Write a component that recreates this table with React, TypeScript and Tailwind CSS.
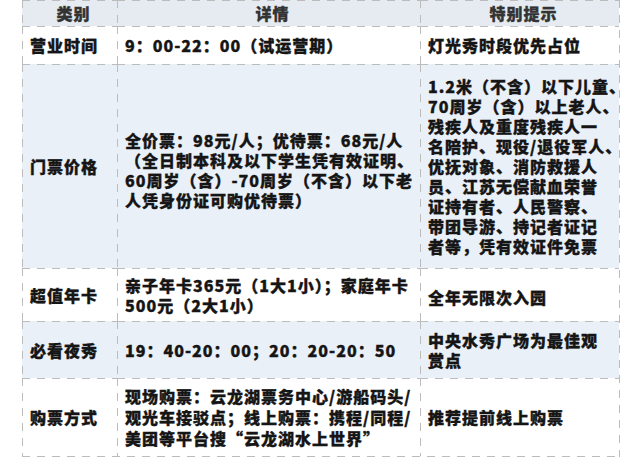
import React from "react";

const H =
  "[background:linear-gradient(to_right,#bcbcbc_8px,transparent_8px)_0_0/15px_1px_repeat-x,linear-gradient(to_bottom,#bcbcbc_8px,transparent_8px)_0_0/1px_15px_repeat-y,#e6ebf1]";
const W =
  "[background:linear-gradient(to_right,#bcbcbc_8px,transparent_8px)_0_0/15px_1px_repeat-x,linear-gradient(to_bottom,#bcbcbc_8px,transparent_8px)_0_0/1px_15px_repeat-y,#ffffff]";
const B =
  "[background:linear-gradient(to_right,#bcbcbc_8px,transparent_8px)_0_0/15px_1px_repeat-x,linear-gradient(to_bottom,#bcbcbc_8px,transparent_8px)_0_0/1px_15px_repeat-y,#eaf0f8]";

function Lines({ lines }: { lines: string[] }) {
  return (
    <div className="flex flex-col">
      {lines.map((l, i) => (
        <span key={i} className="whitespace-nowrap">
          {l}
        </span>
      ))}
    </div>
  );
}

function Cell({
  bg,
  children,
  className = "",
}: {
  bg: string;
  children: React.ReactNode;
  className?: string;
}) {
  return (
    <div className={`${bg} flex items-center pl-2 ${className}`}>{children}</div>
  );
}

export default function App() {
  return (
    <div className="w-[640px] h-[462px] bg-white overflow-hidden font-['Noto_Sans_CJK_SC','Noto_Sans',sans-serif] font-black text-[16px] leading-[20px] tracking-[1px] text-[#151515] [-webkit-text-stroke:0.35px_currentColor]">
      <div className="ml-[22px] w-[598px] pr-px pb-px [background:linear-gradient(to_bottom,#bcbcbc_8px,transparent_8px)_100%_0/1px_15px_repeat-y,linear-gradient(to_right,#bcbcbc_8px,transparent_8px)_0_100%/15px_1px_repeat-x]">
        <div className="grid grid-cols-[95px_303px_199px] grid-rows-[26px_38px_204px_53px_57px_78px]">
          <Cell bg={H} className="justify-center pl-0 text-[#333]">类别</Cell>
          <Cell bg={H} className="justify-center pl-0 text-[#333]">详情</Cell>
          <Cell bg={H} className="justify-center pl-0 text-[#333]">特别提示</Cell>

          <Cell bg={W}>营业时间</Cell>
          <Cell bg={W}>
            <Lines lines={["9：00-22：00（试运营期）"]} />
          </Cell>
          <Cell bg={W}>
            <Lines lines={["灯光秀时段优先占位"]} />
          </Cell>

          <Cell bg={B}>门票价格</Cell>
          <Cell bg={B} className="pt-2">
            <Lines
              lines={[
                "全价票：98元/人；优待票：68元/人",
                "（全日制本科及以下学生凭有效证明、",
                "60周岁（含）-70周岁（不含）以下老",
                "人凭身份证可购优待票）",
              ]}
            />
          </Cell>
          <Cell bg={B}>
            <Lines
              lines={[
                "1.2米（不含）以下儿童、",
                "70周岁（含）以上老人、",
                "残疾人及重度残疾人一",
                "名陪护、现役/退役军人、",
                "优抚对象、消防救援人",
                "员、江苏无偿献血荣誉",
                "证持有者、人民警察、",
                "带团导游、持记者证记",
                "者等，凭有效证件免票",
              ]}
            />
          </Cell>

          <Cell bg={W}>超值年卡</Cell>
          <Cell bg={W}>
            <Lines lines={["亲子年卡365元（1大1小）；家庭年卡", "500元（2大1小）"]} />
          </Cell>
          <Cell bg={W} className="pt-1">
            <Lines lines={["全年无限次入园"]} />
          </Cell>

          <Cell bg={B}>必看夜秀</Cell>
          <Cell bg={B}>
            <Lines lines={["19：40-20：00；20：20-20：50"]} />
          </Cell>
          <Cell bg={B}>
            <Lines lines={["中央水秀广场为最佳观", "赏点"]} />
          </Cell>

          <Cell bg={W}>购票方式</Cell>
          <Cell bg={W} className="leading-[21px]">
            <Lines
              lines={[
                "现场购票：云龙湖票务中心/游船码头/",
                "观光车接驳点；线上购票：携程/同程/",
                "美团等平台搜“云龙湖水上世界”",
              ]}
            />
          </Cell>
          <Cell bg={W}>
            <Lines lines={["推荐提前线上购票"]} />
          </Cell>
        </div>
      </div>
    </div>
  );
}
